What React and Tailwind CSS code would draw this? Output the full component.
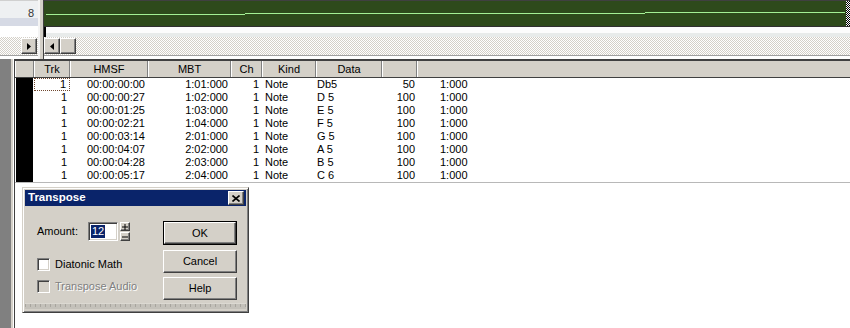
const rows = [
  ['00:00:00:00', '1:01:000', 'Db5', '50'],
  ['00:00:00:27', '1:02:000', 'D 5', '100'],
  ['00:00:01:25', '1:03:000', 'E 5', '100'],
  ['00:00:02:21', '1:04:000', 'F 5', '100'],
  ['00:00:03:14', '2:01:000', 'G 5', '100'],
  ['00:00:04:07', '2:02:000', 'A 5', '100'],
  ['00:00:04:28', '2:03:000', 'B 5', '100'],
  ['00:00:05:17', '2:04:000', 'C 6', '100'],
];

const cols = [
  { label: '', w: 'w-[19px]' },
  { label: 'Trk', w: 'w-[36px]' },
  { label: 'HMSF', w: 'w-[78px]' },
  { label: 'MBT', w: 'w-[83px]' },
  { label: 'Ch', w: 'w-[31px]' },
  { label: 'Kind', w: 'w-[54px]' },
  { label: 'Data', w: 'w-[66px]' },
  { label: '', w: 'w-[35px]' },
];

const raised = 'border border-t-white border-l-white border-r-[#404040] border-b-[#404040] shadow-[inset_-1px_-1px_#808080] bg-[#d4d0c8]';
const checker = 'bg-[image:repeating-conic-gradient(#d4d0c8_0%_25%,#ffffff_0%_50%)] [background-size:2px_2px]';

function Arrow({ dir }) {
  return (
    <svg width="4" height="7" viewBox="0 0 4 7">
      {dir === 'right' ? <path d="M0 0 L4 3.5 L0 7 Z" fill="#000" /> : <path d="M4 0 L0 3.5 L4 7 Z" fill="#000" />}
    </svg>
  );
}

function ScrollBtn({ dir }) {
  return (
    <div className={`${raised} w-[16px] h-[16px] flex items-center justify-center`}>
      {dir && <Arrow dir={dir} />}
    </div>
  );
}

function Checkbox({ label, disabled }) {
  return (
    <div className="flex items-center h-[13px]">
      <div className={`w-[13px] h-[13px] border border-t-[#808080] border-l-[#808080] border-r-white border-b-white shadow-[inset_1px_1px_#404040,inset_-1px_-1px_#d4d0c8] ${disabled ? 'bg-[#d4d0c8]' : 'bg-white'}`} />
      <span className={`ml-[5px] ${disabled ? 'text-[#808080] [text-shadow:1px_1px_#fff]' : 'text-black'}`}>{label}</span>
    </div>
  );
}

function Button({ children, isDefault }) {
  const inner = (
    <div className={`${raised} flex-1 flex items-center justify-center`}>{children}</div>
  );
  if (isDefault) {
    return <div className="h-[24px] border border-black flex">{inner}</div>;
  }
  return <div className="h-[23px] flex">{inner}</div>;
}

function TransposeDialog() {
  return (
    <div className="absolute left-[22px] top-[187px] w-[227px] h-[126px] bg-[#d4d0c8] border border-t-[#d4d0c8] border-l-[#d4d0c8] border-r-[#404040] border-b-[#404040] shadow-[inset_1px_1px_#fff,inset_-1px_-1px_#808080] p-[2px] flex flex-col">
      <div className="h-[16px] bg-[#0a246a] flex items-center justify-between pl-[3px] pr-[2px]">
        <span className="text-white font-bold text-[11.5px]">Transpose</span>
        <div className={`${raised} w-[16px] h-[14px] flex items-center justify-center`}>
          <svg width="8" height="7" viewBox="0 0 8 7">
            <path d="M0.5 0.5 L7.5 6.5 M7.5 0.5 L0.5 6.5" stroke="#000" strokeWidth="1.6" />
          </svg>
        </div>
      </div>
      <div className="h-[97px] flex justify-between pl-[12px] pr-[9px]">
        <div className="flex flex-col">
          <div className="mt-[16px] flex items-center h-[19px]">
            <span className="w-[51px]">Amount:</span>
            <div className="w-[30px] h-[19px] bg-white border border-t-[#808080] border-l-[#808080] border-r-white border-b-white shadow-[inset_1px_1px_#404040,inset_-1px_-1px_#d4d0c8] flex items-center pl-[2px]">
              <span className="bg-[#0a246a] text-white leading-[13px] px-[1px]">12</span>
            </div>
            <div className="ml-[2px] w-[10px] h-[19px] flex flex-col gap-[1px]">
              <div className={`${raised} flex-1 flex items-center justify-center`}>
                <svg width="6" height="6" viewBox="0 0 6 6"><path d="M0 3 H6 M3 0 V6" stroke="#000" /></svg>
              </div>
              <div className={`${raised} flex-1 flex items-center justify-center`}>
                <svg width="6" height="6" viewBox="0 0 6 6"><path d="M0 3 H6" stroke="#000" /></svg>
              </div>
            </div>
          </div>
          <div className="mt-[17px]">
            <Checkbox label="Diatonic Math" />
          </div>
          <div className="mt-[9px]">
            <Checkbox label="Transpose Audio" disabled />
          </div>
        </div>
        <div className="w-[74px] flex flex-col mt-[15px]">
          <Button isDefault>OK</Button>
          <div className="mt-[5px]">
            <Button>Cancel</Button>
          </div>
          <div className="mt-[4px]">
            <Button>Help</Button>
          </div>
        </div>
      </div>
      <div className="h-[6px] bg-[#c4c1ba] border-t border-[#dcd9d2] bg-[image:repeating-linear-gradient(90deg,#a8a59e_0px,#a8a59e_1px,transparent_1px,transparent_5px)] [background-size:100%_3px] bg-no-repeat" />
    </div>
  );
}

export default function App() {
  return (
    <div className="relative w-[850px] h-[328px] overflow-hidden bg-white font-['Liberation_Sans',Arial,sans-serif] text-[11px] text-black leading-none">
      {/* top track area */}
      <div className="flex h-[59px]">
        <div className="w-[38px] flex flex-col">
          <div className="h-[1px] bg-[#d0d0d0]" />
          <div className="h-[17px] bg-[#eef0f2] flex justify-end pr-[4px] pt-[7px] text-[#333]">8</div>
          <div className="h-[8px] bg-[#d6dae5]" />
          <div className="h-[11px] bg-white" />
          <div className={`h-[18px] ${checker} flex items-center justify-end pr-[1px]`}>
            <ScrollBtn dir="right" />
          </div>
          <div className="h-[1px] bg-[#a0a0a0]" />
          <div className="h-[3px] bg-white" />
        </div>
        <div className="w-[6px] bg-[#d4d0c8] border-l-2 border-l-[#f4f4f4] border-r border-r-[#404040]" />
        <div className="flex-1 flex flex-col">
          <div className="h-[1px] bg-[#404040]" />
          <div className="h-[25px] flex bg-[#2e4a1b]">
            <svg className="flex-1" height="25" viewBox="0 0 802 25" preserveAspectRatio="none">
              <path d="M2 13.5 H201 M201 12.5 H601 M601 11.5 H801" stroke="#a4f094" strokeWidth="1" fill="none" shapeRendering="crispEdges" />
            </svg>
            <div className="w-[4px] bg-[image:repeating-conic-gradient(#000_0%_25%,#fff_0%_50%)] [background-size:2px_2px]" />
          </div>
          <div className="h-[1px] bg-[#303030]" />
          <div className="h-[6px] bg-[#fcfcfc] border-l-2 border-black" />
          <div className="h-[4px] bg-[#e8ebea] border-l-2 border-black" />
          <div className={`h-[18px] ${checker} flex items-center`}>
            <ScrollBtn dir="left" />
            <ScrollBtn />
          </div>
          <div className="h-[1px] bg-[#a0a0a0]" />
          <div className="h-[3px] bg-white" />
        </div>
      </div>

      {/* event list */}
      <div className="flex h-[269px]">
        <div className="w-[11px] bg-[#808080]" />
        <div className="w-[3px] bg-[#d4d0c8] border-r border-white" />
        <div className="flex-1 flex flex-col border-l border-[#404040]">
          <div className="h-[2px] bg-[#404040]" />
          <div className="flex h-[17px] bg-[#d4d0c8] border-b border-[#404040]">
            {cols.map((c, i) => (
              <div key={i} className={`${c.w} h-full flex items-center justify-center border-l border-white border-r border-r-[#808080]`}>
                {c.label}
              </div>
            ))}
            <div className="flex-1 h-full border-l border-white" />
          </div>
          {rows.map((r, i) => (
            <div key={i} className="flex h-[13px] items-center">
              <div className="w-[19px] h-full pl-[1px]">
                <div className="w-[17px] h-full bg-black" />
              </div>
              <div className={`w-[36px] h-full flex items-center justify-end pr-[3px] ${i === 0 ? 'border border-dotted border-[#704830]' : ''}`}>1</div>
              <div className="w-[78px] text-right pr-[3px]">{r[0]}</div>
              <div className="w-[83px] text-right pr-[3px]">{r[1]}</div>
              <div className="w-[31px] text-right pr-[3px]">1</div>
              <div className="w-[54px] pl-[3px]">Note</div>
              <div className="w-[66px] pl-[1px]">{r[2]}</div>
              <div className="w-[35px] text-right pr-[2px]">{r[3]}</div>
              <div className="flex-1 pl-[23px]">1:000</div>
            </div>
          ))}
          <div className="h-[1px] bg-[#b8b8b8]" />
        </div>
      </div>

      <TransposeDialog />
    </div>
  );
}
